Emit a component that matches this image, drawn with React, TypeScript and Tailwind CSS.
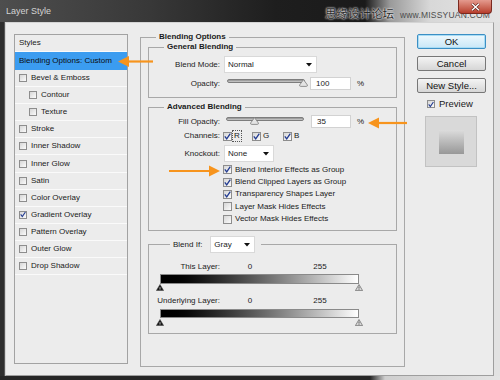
import React from "react";

function Box({ checked, small }: { checked?: boolean; small?: boolean }) {
  return (
    <span
      className={
        small
          ? "flex items-center justify-center shrink-0 w-[8px] h-[8px] border border-[#8d8d8d] bg-linear-to-br from-[#d6d6d6] to-[#fbfbfb]"
          : "flex items-center justify-center shrink-0 w-[9px] h-[9px] border border-[#8d8d8d] bg-linear-to-br from-[#d6d6d6] to-[#fbfbfb]"
      }
    >
      {checked && (
        <svg width={7} height={7} viewBox="0 0 7 7">
          <path d="M0.8 3.4 L2.7 5.8 L6.3 0.6" fill="none" stroke="#223b91" strokeWidth={1.3} />
        </svg>
      )}
    </span>
  );
}

function DropArrow() {
  return (
    <svg width={6} height={4} viewBox="0 0 6 4">
      <path d="M0 0 H6 L3 3.5 Z" fill="#111" />
    </svg>
  );
}

function Select({ label, w }: { label: string; w: string }) {
  return (
    <div className={`${w} h-[17px] shrink-0 flex items-center justify-between bg-white border border-[#d9d9d9] pl-[3px] pr-[4px]`}>
      <span>{label}</span>
      <DropArrow />
    </div>
  );
}

function Slider({ thumb }: { thumb: number }) {
  return (
    <div className="relative w-[78px] h-[13px] shrink-0">
      <div className="absolute left-0 right-0 top-[2px] h-[4px] rounded-full border border-[#7d7d7d] bg-linear-to-b from-[#8e8e8e] to-[#d0d0d0]" />
      <svg
        className="absolute top-[2px]"
        style={{ left: thumb - 4.5 }}
        width={9}
        height={8}
        viewBox="0 0 9 8"
      >
        <path
          d="M4.5 0.6 L8.4 6 Q8.6 7.4 7.4 7.4 L1.6 7.4 Q0.4 7.4 0.6 6 Z"
          fill="#e4e4e4"
          stroke="#7c7c7c"
          strokeWidth={0.8}
        />
      </svg>
    </div>
  );
}

function Input({ value, w }: { value: string; w: string }) {
  return (
    <div className={`${w} h-[13px] shrink-0 flex items-center bg-white border border-[#d2d2d2] pl-[5px]`}>
      {value}
    </div>
  );
}

function Label({ children }: { children: React.ReactNode }) {
  return <span className="w-[71px] shrink-0 text-right text-[#222]">{children}</span>;
}

function BlackTri() {
  return (
    <svg width={8} height={7} viewBox="0 0 8 7">
      <path d="M4 0.5 L7.6 6.6 L0.4 6.6 Z" fill="#151515" stroke="#444" strokeWidth={0.6} />
      <path d="M4 3.2 V5.6" stroke="#cfcfcf" strokeWidth={0.9} />
    </svg>
  );
}

function WhiteTri() {
  return (
    <svg width={8} height={7} viewBox="0 0 8 7">
      <path d="M4 0.5 L7.6 6.6 L0.4 6.6 Z" fill="#d9d9d9" stroke="#727272" strokeWidth={0.8} />
      <path d="M4 2.6 V4.6" stroke="#555" strokeWidth={0.9} />
      <path d="M4 5.2 V5.9" stroke="#555" strokeWidth={0.9} />
    </svg>
  );
}

const styles: { name: string; indent?: boolean; checked?: boolean }[] = [
  { name: "Bevel & Emboss" },
  { name: "Contour", indent: true },
  { name: "Texture", indent: true },
  { name: "Stroke" },
  { name: "Inner Shadow" },
  { name: "Inner Glow" },
  { name: "Satin" },
  { name: "Color Overlay" },
  { name: "Gradient Overlay", checked: true },
  { name: "Pattern Overlay" },
  { name: "Outer Glow" },
  { name: "Drop Shadow" },
];

const advChecks: { name: string; checked: boolean }[] = [
  { name: "Blend Interior Effects as Group", checked: true },
  { name: "Blend Clipped Layers as Group", checked: true },
  { name: "Transparency Shapes Layer", checked: true },
  { name: "Layer Mask Hides Effects", checked: false },
  { name: "Vector Mask Hides Effects", checked: false },
];

function Legend({ children }: { children: React.ReactNode }) {
  return (
    <span className="absolute left-[15px] -top-[7px] px-[3px] bg-[#ececec] font-bold text-[8px] leading-[12px] text-[#1a1a1a]">
      {children}
    </span>
  );
}

function Btn({ children, primary }: { children: React.ReactNode; primary?: boolean }) {
  return (
    <div
      className={
        primary
          ? "h-[15px] w-full flex items-center justify-center rounded-[2px] border border-[#3c8fc4] bg-linear-to-b from-[#eef8fd] to-[#c9e7f7] text-[9.5px] text-[#111] shadow-[inset_0_0_0_1px_#a8dcf5]"
          : "h-[15px] w-full flex items-center justify-center rounded-[2px] border border-[#777] bg-linear-to-b from-[#f4f4f4] to-[#d6d6d6] text-[9.5px] text-[#111]"
      }
    >
      {children}
    </div>
  );
}

function Arrow({ x1, x2, y }: { x1: number; x2: number; y: number }) {
  // x1 = tip, x2 = tail
  const dir = x2 > x1 ? 1 : -1;
  const base = x1 + dir * 11;
  return (
    <g>
      <line x1={base} y1={y} x2={x2} y2={y} stroke="#f7941d" strokeWidth={2.2} />
      <path d={`M${x1} ${y} L${base} ${y - 5.5} L${base} ${y + 5.5} Z`} fill="#f7941d" />
    </g>
  );
}

export default function App() {
  return (
    <div className="relative w-[500px] h-[380px] overflow-hidden flex flex-col bg-[#2b2b2b] font-['Liberation_Sans',Arial,sans-serif] text-[8px] leading-none text-[#1a1a1a]">
      {/* Title bar */}
      <div className="relative h-[22px] shrink-0 flex items-center bg-[linear-gradient(to_right,#4e4e4e_0%,#383838_30%,#1e1e1e_55%,#1a1a1a_73%,#9a9a9a_78%,#d8d8d8_86%,#e4e4e4_100%)]">
        <span className="ml-[6px] mt-[1px] text-[9px] text-[#d4d4d4]">Layer Style</span>
        <div className="ml-auto mr-[10px] mt-[6px] flex items-center gap-[6px]">
          <span className="text-[11.5px] font-['Noto_Sans_CJK_SC',sans-serif] text-[#2b2b2b] [text-shadow:0_0_2px_#fff,0_0_2px_#fff]">
            思缘设计论坛
          </span>
          <span className="mt-[3px] text-[8.5px] text-[#4d4d4d] tracking-[0.2px]">www.MISSYUAN.COM</span>
        </div>
        <div className="absolute right-[8px] top-0 w-[34px] h-[14px] rounded-b-[4px] border border-t-0 border-[#7a2a20] bg-linear-to-b from-[#e49a8e] to-[#b73d2c] flex items-center justify-center">
          <svg width={9} height={8} viewBox="0 0 9 8">
            <path d="M1 0.8 L8 7.2 M8 0.8 L1 7.2" stroke="#5a1a12" strokeWidth={2.6} />
            <path d="M1 0.8 L8 7.2 M8 0.8 L1 7.2" stroke="#fff" strokeWidth={1.5} />
          </svg>
        </div>
      </div>

      {/* Body row */}
      <div className="flex flex-1 min-h-0">
        <div className="w-[5px] shrink-0 bg-[#2e2e2e] border-r border-[#575757]" />
        <div className="w-[489px] shrink-0 flex items-start pl-[8px] bg-[#ececec] border border-t-[#d4d4d4] border-l-[#d4d4d4] border-r-[#9e9e9e] border-b-[#9e9e9e]">
          {/* Styles list */}
          <div className="mt-[11px] w-[114px] h-[330px] shrink-0 flex flex-col border border-[#a2a2a2] bg-[#ececec]">
            <div className="h-[17px] shrink-0 flex items-center pl-[4px] border-b border-[#fafafa]">Styles</div>
            <div className="h-[18px] shrink-0 flex items-center pl-[4px] bg-[#3b9cf0] text-[#0d0d0d]">
              Blending Options: Custom
            </div>
            {styles.map((s) => (
              <div
                key={s.name}
                className={
                  s.indent
                    ? "h-[17.1px] shrink-0 flex items-center gap-[4px] pl-[14px] border-b border-[#fafafa]"
                    : "h-[17.1px] shrink-0 flex items-center gap-[4px] pl-[4px] border-b border-[#fafafa]"
                }
              >
                <Box small checked={s.checked} />
                <span>{s.name}</span>
              </div>
            ))}
          </div>

          {/* Blending Options group */}
          <div className="relative ml-[12px] mt-[14px] w-[265px] h-[330px] shrink-0 border border-[#a8a8a8]">
            <Legend>Blending Options</Legend>

            {/* General Blending */}
            <div className="relative ml-[7px] mt-[9px] w-[249px] h-[51px] border border-[#a8a8a8]">
              <Legend>General Blending</Legend>
              <div className="mt-[8px] h-[17px] flex items-center">
                <Label>Blend Mode:</Label>
                <div className="ml-[4px]">
                  <Select label="Normal" w="w-[93px]" />
                </div>
              </div>
              <div className="mt-[4px] h-[13px] flex items-center">
                <Label>Opacity:</Label>
                <div className="ml-[7px]">
                  <Slider thumb={76} />
                </div>
                <div className="ml-[5px]">
                  <Input value="100" w="w-[41px]" />
                </div>
                <span className="ml-[6px]">%</span>
              </div>
            </div>

            {/* Advanced Blending */}
            <div className="relative ml-[7px] mt-[9px] w-[249px] h-[124px] border border-[#a8a8a8]">
              <Legend>Advanced Blending</Legend>
              <div className="mt-[7px] h-[13px] flex items-center">
                <Label>Fill Opacity:</Label>
                <div className="ml-[6px]">
                  <Slider thumb={28} />
                </div>
                <div className="ml-[7px]">
                  <Input value="35" w="w-[40px]" />
                </div>
                <span className="ml-[6px]">%</span>
              </div>
              <div className="mt-[3px] h-[10px] flex items-center">
                <Label>Channels:</Label>
                <div className="ml-[3px] w-[29px] flex items-center">
                  <Box checked />
                  <span className="ml-[1px] px-[1px] py-[1px] outline outline-dotted outline-[#555]">R</span>
                </div>
                <div className="w-[31px] flex items-center gap-[2px]">
                  <Box checked />
                  <span>G</span>
                </div>
                <div className="flex items-center gap-[2px]">
                  <Box checked />
                  <span>B</span>
                </div>
              </div>
              <div className="mt-[4px] h-[17px] flex items-center">
                <Label>Knockout:</Label>
                <div className="ml-[4px]">
                  <Select label="None" w="w-[50px]" />
                </div>
              </div>
              <div className="mt-[1.5px] flex flex-col">
                {advChecks.map((c) => (
                  <div key={c.name} className="h-[12.4px] flex items-center gap-[3px] pl-[74px]">
                    <Box checked={c.checked} />
                    <span>{c.name}</span>
                  </div>
                ))}
              </div>
            </div>

            {/* Blend If */}
            <div className="relative ml-[7px] mt-[13px] w-[249px] h-[90px] border border-[#a8a8a8]">
              <div className="absolute left-[21px] -top-[9px] flex items-center gap-[8px] pl-[3px] pr-[6px] bg-[#ececec]">
                <span>Blend If:</span>
                <Select label="Gray" w="w-[45px]" />
              </div>
              <div className="mt-[17px] h-[10px] flex items-center">
                <Label>This Layer:</Label>
                <span className="ml-[26px] w-[8px] text-center">0</span>
                <span className="ml-[54px] w-[24px] text-center">255</span>
              </div>
              <div className="ml-[11px] mt-[2px] w-[199px] h-[10px] border border-[#8a8a8a] bg-linear-to-r from-black to-white" />
              <div className="ml-[7px] w-[207px] flex justify-between">
                <BlackTri />
                <WhiteTri />
              </div>
              <div className="mt-[5px] h-[10px] flex items-center">
                <Label>Underlying Layer:</Label>
                <span className="ml-[26px] w-[8px] text-center">0</span>
                <span className="ml-[54px] w-[24px] text-center">255</span>
              </div>
              <div className="ml-[11px] mt-[3px] w-[199px] h-[9px] border border-[#8a8a8a] bg-linear-to-r from-black to-white" />
              <div className="ml-[7px] mt-[1px] w-[207px] flex justify-between">
                <BlackTri />
                <WhiteTri />
              </div>
            </div>
          </div>

          {/* Right column */}
          <div className="ml-[12px] mt-[11px] w-[69px] shrink-0 flex flex-col">
            <Btn primary>OK</Btn>
            <div className="mt-[7px]">
              <Btn>Cancel</Btn>
            </div>
            <div className="mt-[7px]">
              <Btn>New Style...</Btn>
            </div>
            <div className="mt-[6px] ml-[10px] h-[10px] flex items-center gap-[4px] text-[9.5px]">
              <Box checked small />
              <span>Preview</span>
            </div>
            <div className="mt-[7px] ml-[8px] w-[52px] h-[51px] flex items-center justify-center border border-[#c2c2c2] bg-[#d9d9d9]">
              <div className="w-[25px] h-[24px] bg-linear-to-b from-[#dcdcdc] to-[#989898]" />
            </div>
          </div>
        </div>
        <div className="flex-1 bg-[#e2e2e2]" />
      </div>
      <div className="h-[4px] shrink-0 bg-[linear-gradient(to_right,#262626_0%,#262626_74%,#cfcfcf_77%,#e4e4e4_100%)]" />

      {/* Orange annotation arrows */}
      <svg className="absolute inset-0 pointer-events-none" width={500} height={380}>
        <Arrow x1={118} x2={153} y={61.5} />
        <Arrow x1={368} x2={407} y={123} />
        <Arrow x1={220} x2={169} y={171} />
      </svg>
    </div>
  );
}
